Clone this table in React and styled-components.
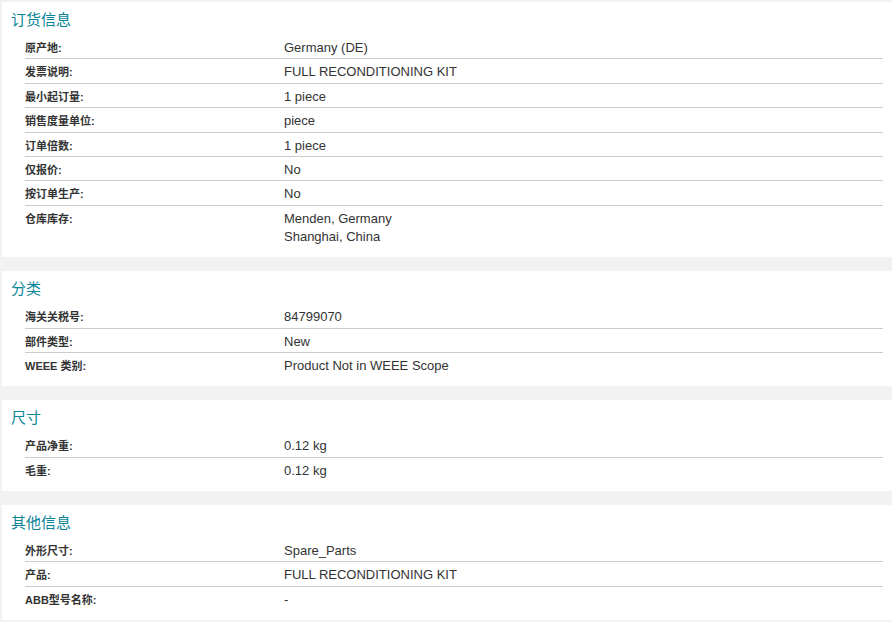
import React from 'react';
import styled, { createGlobalStyle } from 'styled-components';

const GlobalStyle = createGlobalStyle`
    html, body {
        margin: 0;
        padding: 0;
        background: #f2f2f2;
    }
    body {
        font-family: 'Liberation Sans', Arial, 'Noto Sans CJK SC', sans-serif;
        color: #333333;
    }
`;

const Page = styled.div`
    padding: 2px 0 0 2px;
    display: flex;
    flex-direction: column;
    gap: 14px;
`;

const Section = styled.section`
    background: #ffffff;
    padding: 8px 9px 10px 9px;
`;

const Title = styled.h2`
    margin: 0 0 5px;
    font-family: 'Liberation Sans', 'Noto Sans CJK SC', sans-serif;
    font-size: 15px;
    font-weight: normal;
    line-height: 20px;
    color: #0a8598;
`;

const Rows = styled.dl`
    margin: 0;
    padding-left: 14px;
`;

const Row = styled.div`
    display: grid;
    grid-template-columns: 259px 1fr;
    padding: 4px 0 1.4px;
    border-bottom: 1px solid #cccccc;

    &:last-child {
        border-bottom: none;
    }
`;

const Label = styled.dt`
    font-family: 'Liberation Sans', 'Noto Sans CJK SC', sans-serif;
    font-size: 11px;
    font-weight: bold;
    line-height: 18px;
    color: #333333;
`;

const Value = styled.dd`
    margin: 0;
    font-family: 'Liberation Sans', Arial, sans-serif;
    font-size: 13px;
    line-height: 18px;
    color: #333333;
`;

const sections = [
    {
        title: '订货信息',
        rows: [
            ['原产地:', ['Germany (DE)']],
            ['发票说明:', ['FULL RECONDITIONING KIT']],
            ['最小起订量:', ['1 piece']],
            ['销售度量单位:', ['piece']],
            ['订单倍数:', ['1 piece']],
            ['仅报价:', ['No']],
            ['按订单生产:', ['No']],
            ['仓库库存:', ['Menden, Germany', 'Shanghai, China']],
        ],
    },
    {
        title: '分类',
        rows: [
            ['海关关税号:', ['84799070']],
            ['部件类型:', ['New']],
            ['WEEE 类别:', ['Product Not in WEEE Scope']],
        ],
    },
    {
        title: '尺寸',
        rows: [
            ['产品净重:', ['0.12 kg']],
            ['毛重:', ['0.12 kg']],
        ],
    },
    {
        title: '其他信息',
        rows: [
            ['外形尺寸:', ['Spare_Parts']],
            ['产品:', ['FULL RECONDITIONING KIT']],
            ['ABB型号名称:', ['-']],
        ],
    },
];

export default function App() {
    return (
        <>
            <GlobalStyle />
            <Page>
                {sections.map(section => (
                    <Section key={section.title}>
                        <Title>{section.title}</Title>
                        <Rows>
                            {section.rows.map(([label, lines]) => (
                                <Row key={label}>
                                    <Label>{label}</Label>
                                    <Value>
                                        {lines.map(line => (
                                            <div key={line}>{line}</div>
                                        ))}
                                    </Value>
                                </Row>
                            ))}
                        </Rows>
                    </Section>
                ))}
            </Page>
        </>
    );
}
